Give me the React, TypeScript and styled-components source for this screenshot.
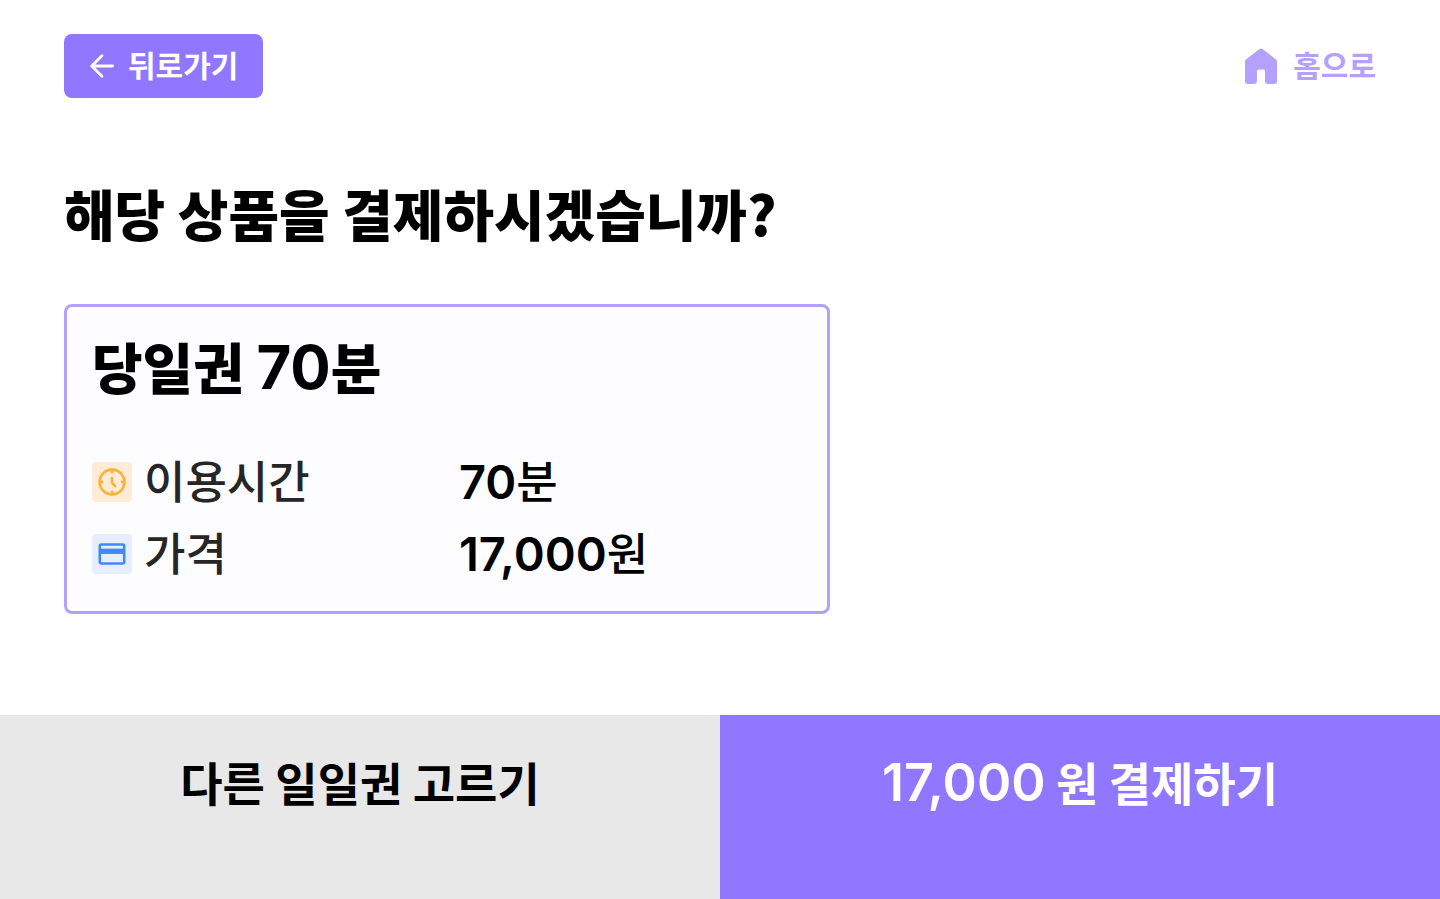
import React from "react";
import styled, { createGlobalStyle } from "styled-components";

const GlobalStyle = createGlobalStyle`
  *, *::before, *::after { box-sizing: border-box; }
  body {
    margin: 0;
    background: #ffffff;
    color: #000000;
    font-family: "Noto Sans CJK KR", sans-serif;
  }
  h1, h2, dl, dt, dd { margin: 0; }
`;

const Page = styled.div`
  display: flex;
  flex-direction: column;
  min-height: 100vh;
`;

const Header = styled.header`
  display: flex;
  align-items: center;
  justify-content: space-between;
  padding: 34px 64px 0;
`;

const BackButton = styled.button`
  display: flex;
  align-items: center;
  gap: 12px;
  height: 64px;
  padding: 0 25px 0 24px;
  border: 0;
  border-radius: 8px;
  background: #8f77ff;
  color: #ffffff;
  font-family: inherit;
  font-size: 30px;
  line-height: 36px;
  font-weight: 700;
  cursor: pointer;
`;

const HomeLink = styled.a`
  display: flex;
  align-items: center;
  gap: 16px;
  color: #b3a0ff;
  font-size: 30px;
  line-height: 36px;
  font-weight: 700;
  text-decoration: none;
`;

/* Hangul sits low in its line box; the bottom padding centres it optically. */
const LabelText = styled.span`
  display: block;
  padding-bottom: 4px;
`;

const Main = styled.main`
  flex: 1;
  padding: 76px 64px 64px;
`;

const Title = styled.h1`
  margin-bottom: 54px;
  font-size: 55px;
  line-height: 76px;
  font-weight: 900;
`;

const Card = styled.section`
  max-width: 766px;
  padding: 20px 25px 27px;
  border: 3px solid #b3a0ff;
  border-radius: 8px;
  background: #fdfcff;
`;

const CardTitle = styled.h2`
  margin-bottom: 49px;
  font-size: 55px;
  line-height: 76px;
  font-weight: 900;
`;

const Figure = styled.span<{ $size: number; $weight?: number }>`
  font-family: Inter, "Noto Sans CJK KR", sans-serif;
  font-size: ${({ $size }) => $size}px;
  font-weight: ${({ $weight = 600 }) => $weight};
  line-height: 0;
`;

const Details = styled.dl`
  display: flex;
  flex-direction: column;
  gap: 12px;
`;

const DetailRow = styled.div`
  display: grid;
  grid-template-columns: 367px 1fr;
  align-items: center;
`;

const DetailLabel = styled.dt`
  display: flex;
  align-items: center;
  gap: 12px;
  color: #262626;
  font-size: 45px;
  line-height: 56px;
  font-weight: 500;
`;

const DetailValue = styled.dd`
  font-size: 45px;
  line-height: 56px;
  font-weight: 500;
`;

const IconTile = styled.span<{ $background: string }>`
  display: flex;
  align-items: center;
  justify-content: center;
  width: 40px;
  height: 40px;
  border-radius: 4px;
  background: ${({ $background }) => $background};
`;

const Actions = styled.footer`
  display: grid;
  grid-template-columns: 1fr 1fr;
`;

const ActionButton = styled.button<{ $primary?: boolean }>`
  display: block;
  padding: 34px 24px 86px;
  border: 0;
  background: ${({ $primary }) => ($primary ? "#8f77ff" : "#e8e8e8")};
  color: ${({ $primary }) => ($primary ? "#ffffff" : "#000000")};
  font-family: inherit;
  font-size: 46px;
  line-height: 64px;
  font-weight: 700;
  text-align: center;
  cursor: pointer;
`;

const BackIcon = () => (
  <svg width="28" height="28" viewBox="0 0 28 28" fill="none" stroke="currentColor" strokeWidth="2.8" strokeLinecap="round" strokeLinejoin="round" aria-hidden="true">
    <path d="M24.5 14H4M14 3.700 3.700 14 14 24.300" />
  </svg>
);

const HomeIcon = () => (
  <svg width="32" height="36" viewBox="0 -1 32 36" fill="currentColor" aria-hidden="true">
    <path d="M0 12.700c0-1 .5-1.900 1.300-2.500L14.100.300a3.200 3.200 0 0 1 3.800 0l12.800 9.900c.8.600 1.300 1.500 1.300 2.500V32a3 3 0 0 1-3 3h-6a3 3 0 0 1-3-3V22a1.500 1.500 0 0 0-1.500-1.500h-5A1.500 1.500 0 0 0 12 22v10a3 3 0 0 1-3 3H3a3 3 0 0 1-3-3Z" />
  </svg>
);

const ClockIcon = () => (
  <svg width="32" height="32" viewBox="0 0 32 32" fill="none" stroke="#ffb039" strokeWidth="2.600" strokeLinecap="round" strokeLinejoin="round" aria-hidden="true">
    <circle cx="16" cy="16" r="12.400" />
    <path d="M16 12.200v4.600l3.100 3.300" strokeWidth="2.700" />
    <path d="M16 3.600v3.600M16 24.800v3.600M3.600 16h3.600M24.800 16h3.600" strokeLinecap="butt" />
  </svg>
);

const CardIcon = () => (
  <svg width="32" height="32" viewBox="0 0 32 32" fill="none" stroke="#4387ff" strokeWidth="2.600" aria-hidden="true">
    <rect x="3.800" y="6.500" width="24.400" height="19" rx="1.500" />
    <path d="M4 13.300h24" strokeWidth="5.300" />
  </svg>
);

export default function App() {
  return (
    <>
      <GlobalStyle />
      <Page>
        <Header>
          <BackButton type="button">
            <BackIcon />
            <LabelText>뒤로가기</LabelText>
          </BackButton>
          <HomeLink href="#home">
            <HomeIcon />
            <LabelText>홈으로</LabelText>
          </HomeLink>
        </Header>
        <Main>
          <Title>해당 상품을 결제하시겠습니까?</Title>
          <Card>
            <CardTitle>
              당일권 <Figure $size={60} $weight={700}>70</Figure>분
            </CardTitle>
            <Details>
              <DetailRow>
                <DetailLabel>
                  <IconTile $background="#ffecd6">
                    <ClockIcon />
                  </IconTile>
                  <LabelText>이용시간</LabelText>
                </DetailLabel>
                <DetailValue>
                  <LabelText>
                    <Figure $size={47}>70</Figure>분
                  </LabelText>
                </DetailValue>
              </DetailRow>
              <DetailRow>
                <DetailLabel>
                  <IconTile $background="#e6eeff">
                    <CardIcon />
                  </IconTile>
                  <LabelText>가격</LabelText>
                </DetailLabel>
                <DetailValue>
                  <LabelText>
                    <Figure $size={47}>17,000</Figure>원
                  </LabelText>
                </DetailValue>
              </DetailRow>
            </Details>
          </Card>
        </Main>
        <Actions>
          <ActionButton type="button">다른 일일권 고르기</ActionButton>
          <ActionButton type="button" $primary>
            <Figure $size={52}>17,000</Figure> 원 결제하기
          </ActionButton>
        </Actions>
      </Page>
    </>
  );
}
